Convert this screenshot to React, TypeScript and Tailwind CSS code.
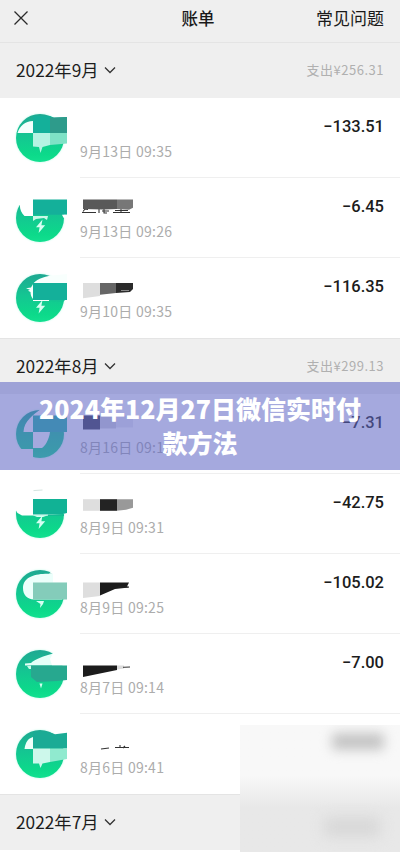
import React from "react";

type Bill = {
  date: string;
  amount: string;
  icon: React.ReactNode;
  name: React.ReactNode;
};

const TEAL = "#14b09a";
const BOLT = "M26.5 29.5L20 37.2h3.6L22.6 43l6.6-7.8h-3.8z";

// green disc shared by every row, the masked pieces are passed as children
function Disc({ children }: { children: React.ReactNode }) {
  return (
    <svg width="56" height="48" viewBox="0 0 56 48" className="shrink-0 overflow-visible">
      <defs>
        <linearGradient id="disc" x1="0" y1="0" x2="0" y2="1">
          <stop offset="0" stopColor="#1fa892" />
          <stop offset="0.45" stopColor="#14c692" />
          <stop offset="0.85" stopColor="#0cda8a" />
          <stop offset="1" stopColor="#12e090" />
        </linearGradient>
        <filter id="glow" x="-20%" y="-20%" width="140%" height="140%">
          <feGaussianBlur stdDeviation="1.2" />
        </filter>
      </defs>
      <circle cx="24" cy="24" r="24" fill="#b9fbe6" filter="url(#glow)" />
      <circle cx="24" cy="24" r="24" fill="url(#disc)" />
      {children}
    </svg>
  );
}

function NameMask({ children }: { children?: React.ReactNode }) {
  return (
    <svg width="56" height="27" viewBox="0 0 56 27" className="block overflow-visible">
      {children}
    </svg>
  );
}

const september: Bill[] = [
  {
    date: "9月13日 09:35",
    amount: "−133.51",
    icon: (
      <Disc>
        <path d="M17 7v12H1.5C3.5 12 9 7 17 7z" fill="#f4fffc" />
        <path d="M17 2h17l4 1.8L51 3v16H17z" fill={TEAL} />
        <path d="M34 3.5h4L51 3v16H34z" fill="#2e9b8b" />
        <path d="M17 19h17v12l-7.5 2-2 6-1.5-6-6-.5z" fill="#b5f3e2" />
        <path d="M34 19h17v10.5L34 31z" fill="#7fe2c6" />
      </Disc>
    ),
    name: <NameMask />,
  },
  {
    date: "9月13日 09:26",
    amount: "−6.45",
    icon: (
      <Disc>
        <path d="M-3-3h60v9.5H17V22H8.5C5.5 19 4 16 3.8 11L1.5 11-3 14z" fill="#fff" />
        <path d="M17 5.5h34v15.2H17z" fill={TEAL} />
        <path d="M46 20.7h6v3h-4.5z" fill="#fff" />
        <path d="M17 22h15l-1 4-3-2-8 1-3 2z" fill="#c9f8e9" />
        <path d={BOLT} transform="translate(0 -4)" fill="#d6fff2" />
      </Disc>
    ),
    name: (
      <NameMask>
        <path d="M3 17.5l2-2.5 3 .5M2 18.5h14M19 15v4M24 15v4h3M22 17h7M35 16.5h13M33 18.5h17M41 14v5" stroke="#333" strokeWidth="1.1" fill="none" />
        <path d="M3 5.5h34V15l-14 .6L3 15z" fill="#595959" />
        <path d="M37 5.5h16v8.2l-4 2L37 15z" fill="#777" />
      </NameMask>
    ),
  },
  {
    date: "9月10日 09:35",
    amount: "−116.35",
    icon: (
      <Disc>
        <path d="M36 1.6C27 3 19 6 16.5 11L15 13.5l-5 .8 4 1.5-2 1 2.5 1.2c0 3 1 5 2.5 7v2h16v-2.5h18V0z" fill="#f8fffd" />
        <path d="M34 27V25h17v-1l-4 4z" fill="#14c692" />
        <path d="M17 9h34v17H17z" fill={TEAL} />
        <path d={BOLT} transform="translate(0 -3.5)" fill="#d6fff2" />
      </Disc>
    ),
    name: (
      <NameMask>
        <path d="M3 9h17v13L3 24.3z" fill="#dedede" />
        <path d="M20 9h16v10l-16 1.8z" fill="#666" />
        <path d="M36 9h17v6l-3 3-14 1z" fill="#2b2b2b" />
        <path d="M41 16.5h8" stroke="#888" />
      </NameMask>
    ),
  },
];

const august: Bill[] = [
  {
    date: "8月16日 09:12",
    amount: "−7.31",
    icon: (
      <Disc>
        <path d="M25-1C17 5 8 11 7.5 22H17V6h36V-3z" fill="#fff" />
        <path d="M17 5.5h34V22H17z" fill="#1fb8a2" />
        <path d="M17 22h17c-1 8-5 14-8 16h-9z" fill="#fff" />
        <path d="M-3 39h20v12H-3z" fill="#fff" />
      </Disc>
    ),
    name: (
      <NameMask>
        <path d="M3 5.5h17v14H3z" fill="#3c3c50" />
        <path d="M20 5.5h16v13H20z" fill="#d2d2da" />
        <path d="M36 5.5h17v12H36z" fill="#eaeaf0" />
      </NameMask>
    ),
  },
  {
    date: "8月9日 09:31",
    amount: "−42.75",
    icon: (
      <Disc>
        <path d="M-4-4h60v27L32 25.5H6L1.5 23 0 20.5-4 23z" fill="#fff" />
        <path d="M17.5.6l9-.6" stroke="#d5e4e0" />
        <path d="M17 9h34v14l-6 1.5H17z" fill="#11b295" />
        <path d="M32 24.5h16v1.5H32z" fill="#12bd92" />
        <path d="M17 25.2h15l-5 1.8h-6z" fill="#d6fff2" />
        <path d={BOLT} transform="translate(0 -4)" fill="#d6fff2" />
      </Disc>
    ),
    name: (
      <NameMask>
        <path d="M3 9.2h17v11.6H3z" fill="#dedede" />
        <path d="M20 9.2h17v11.6H20z" fill="#232323" />
        <path d="M37 9.2h16v8.6l-7 2-9 1z" fill="#999" />
      </NameMask>
    ),
  },
  {
    date: "8月9日 09:25",
    amount: "−105.02",
    icon: (
      <Disc>
        <path d="M37 4C24 3 7 5 7 18c0 7 4 11 11 11.5h28V29L54 4z" fill="#ecfffb" />
        <path d="M37 4l-4-.5L40-2h14v14.5H37z" fill="#fff" />
        <path d="M17 12.5h34v17H17z" fill="#84ccba" />
        <path d="M20 31h8l-1 3-3 4 .5-4z" fill="#d6fff2" />
      </Disc>
    ),
    name: (
      <NameMask>
        <path d="M3 12.5h17V26L3 28z" fill="#dedede" />
        <path d="M20 12.5h29l-2 4 2 1-14 1.5-15 6.5z" fill="#1c1c1c" />
        <path d="M38 17h11" stroke="#222" />
      </NameMask>
    ),
  },
  {
    date: "8月7日 09:14",
    amount: "−7.00",
    icon: (
      <Disc>
        <path d="M37 3.5C28 6 19 9 15 13l-6 .5v2h45V3.5z" fill="#e4fff8" />
        <path d="M37 3l-3 6 2 6.5h18V0z" fill="#fff" />
        <path d="M11 16h6l-1 3h-3z" fill="#c8fae9" />
        <path d="M15 15.5h36V30l-10 1-20 1-6-5z" fill="#27a88f" />
        <path d="M23.5 33.5h3l-1.5 5z" fill="#d6fff2" />
      </Disc>
    ),
    name: (
      <NameMask>
        <path d="M3 15.5h34V20L3 27z" fill="#1c1c1c" />
        <path d="M37 15.5h7v3l-7 1z" fill="#dcdcdc" />
        <path d="M43 17.3l7-.3" stroke="#333" />
      </NameMask>
    ),
  },
  {
    date: "8月6日 09:41",
    amount: "",
    icon: (
      <Disc>
        <path d="M17 7v12H8.5C9.5 12 12 8.5 17 7z" fill="#effffa" />
        <path d="M17 2h16l6 2.2L51 2.8v15.7H17z" fill="#1bab95" />
        <path d="M17 18.5h17V32l-7.5 1.5-2 4.5-1.5-4.5H17z" fill="#cdf8eb" />
        <path d="M34 18.5h17V29l-17 3z" fill="#90eacf" />
      </Disc>
    ),
    name: (
      <NameMask>
        <path d="M21 19l8-1M35 17.5h14M40 15v3M45 16l-2 2" stroke="#333" strokeWidth="1.1" fill="none" />
      </NameMask>
    ),
  },
];

function MonthHeader({ month, total }: { month: string; total?: string }) {
  return (
    <div className="flex h-14 shrink-0 items-center border-t border-[#e4e4e4] bg-[#efefef] px-4 pb-0.5">
      <h2 className="text-[17.3px] text-[#1d1d1d]">{month}</h2>
      <svg width="12" height="8" viewBox="0 0 12 8" className="ml-[5px]">
        <path d="M1 1.5l5 5 5-5" fill="none" stroke="#333" strokeWidth="1.3" />
      </svg>
      {total && (
        <span className="ml-auto text-[13px] tracking-[0.5px] text-[#b0b0b0]">支出¥{total}</span>
      )}
    </div>
  );
}

function BillRow({ bill, last }: { bill: Bill; last: boolean }) {
  return (
    <div className="flex h-20 shrink-0 bg-white pl-4">
      <div className="pt-4">{bill.icon}</div>
      <div className={`ml-2 flex flex-1 justify-between pr-4 ${last ? "" : "border-b border-[#efefef]"}`}>
        <div className="pt-4">
          {bill.name}
          <p className="text-[14px] leading-5 tracking-[0.25px] text-[#acacac]">{bill.date}</p>
        </div>
        <span className="pt-[18px] font-[Roboto] text-[16.5px] leading-[22px] font-medium text-[#1c1c1c]">
          {bill.amount}
        </span>
      </div>
    </div>
  );
}

export default function App() {
  return (
    <div className="relative flex h-[852px] w-[400px] flex-col overflow-hidden bg-white font-['Noto_Sans_CJK_SC',sans-serif]">
      <header className="grid h-[42px] shrink-0 grid-cols-3 items-center bg-[#efefef] px-4 pb-1.5 text-[17px] text-[#1a1a1a]">
        <svg width="16" height="16" viewBox="0 0 16 16" className="-ml-[3px]">
          <path d="M1.5 1.5l13 13M14.5 1.5l-13 13" stroke="#2a2a2a" strokeWidth="1.3" />
        </svg>
        <h1 className="pr-1 text-center text-[16.5px] font-medium">账单</h1>
        <span className="text-right">常见问题</span>
      </header>

      <MonthHeader month="2022年9月" total="256.31" />
      {september.map((bill, i) => (
        <BillRow key={i} bill={bill} last={i === september.length - 1} />
      ))}

      <MonthHeader month="2022年8月" total="299.13" />
      {august.map((bill, i) => (
        <BillRow key={i} bill={bill} last={i === august.length - 1} />
      ))}

      <MonthHeader month="2022年7月" />

      {/* frosted corner */}
      <div className="absolute right-0 bottom-0 h-[127px] w-40 overflow-hidden bg-linear-to-b from-[#f8f8f8] from-40% to-[#e8e8e8] to-65%">
        <div className="absolute top-2 left-[92px] h-[17px] w-[52px] rounded bg-[#c4c4c4] blur-[6px]" />
        <div className="absolute top-[92px] left-[84px] h-5 w-14 rounded bg-[#d8d8d8] blur-[7px]" />
      </div>

      {/* title banner */}
      <div className="absolute top-[382px] left-0 flex h-[88px] w-full items-center justify-center bg-[rgb(97,104,197)]/57 px-9 pb-0.5">
        <p className="text-center text-[25px] leading-[34px] font-black text-white">
          2024年12月27日微信实时付
          <br />
          款方法
        </p>
      </div>
    </div>
  );
}
